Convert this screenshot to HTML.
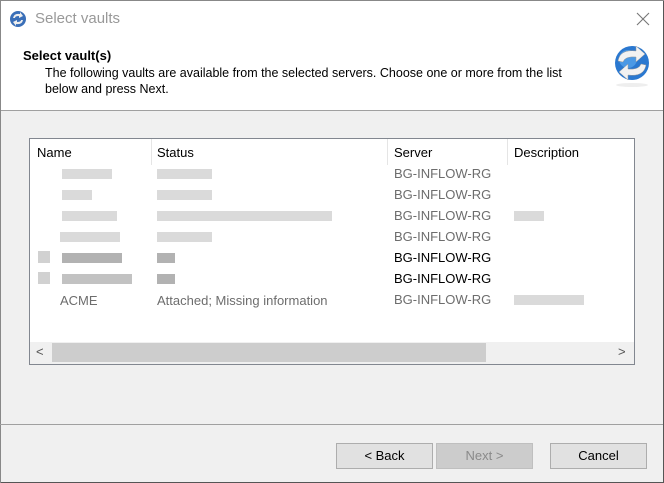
<!DOCTYPE html>
<html><head><style>
body{margin:0;width:664px;height:483px;overflow:hidden;font-family:"Liberation Sans",sans-serif;font-size:13px;background:#f0f0f0;position:relative}
.abs{position:absolute}
.bl{position:absolute;height:10px;background:#d6d6d6;opacity:.9}
.btn{position:absolute;top:443px;width:95px;height:24px;border:1px solid #adadad;background:#e1e1e1;text-align:center;line-height:24px;font-size:13px}
</style></head><body>
<div class="abs" style="left:0;top:0;width:664px;height:110px;background:#fff"></div>
<div class="abs" style="left:0;top:110px;width:664px;height:1px;background:#a0a0a0"></div>
<div class="abs" style="right:0;top:0;width:1px;height:483px;background:#555"></div>
<div class="abs" style="left:0;bottom:0;width:664px;height:1px;background:#555"></div>
<div class="abs" style="left:0;top:0;width:1px;height:483px;background:#888"></div>
<div class="abs" style="left:0;top:0;width:664px;height:1px;background:#888"></div>
<svg class="abs" style="left:9px;top:10px" width="18" height="18" viewBox="0 0 18 18"><circle cx="9" cy="9" r="8" fill="#3a6fb8"/><path d="M4 8 Q5 3 11 4 L11 2 L14 6 L10 8 L10 6 Q6 6 6 8Z" fill="#eee"/><path d="M14 10 Q13 15 7 14 L7 16 L4 12 L8 10 L8 12 Q12 12 12 10Z" fill="#eee"/></svg>
<div class="abs" style="left:35px;top:10px;font-size:15px;color:#999">Select vaults</div>
<svg class="abs" style="left:636px;top:12px" width="14" height="14" viewBox="0 0 14 14"><path d="M1 1L13 13M13 1L1 13" stroke="#777" stroke-width="1.1"/></svg>
<div class="abs" style="left:23px;top:48px;font-weight:bold;font-size:13px">Select vault(s)</div>
<div class="abs" style="left:45px;top:65px;font-size:12.5px;line-height:16px;width:545px">The following vaults are available from the selected servers. Choose one or more from the list below and press Next.</div>
<svg class="abs" style="left:612px;top:43px" width="40" height="46" viewBox="0 0 40 46"><circle cx="20" cy="20" r="17" fill="#2a78d0"/><circle cx="16" cy="16" r="9" fill="#5aa6ee" opacity=".7"/><path d="M6 18 Q8 6 24 8 L24 3 L33 11 L24 19 L24 14 Q13 13 11 19Z" fill="#f2f2f2" stroke="#999" stroke-width=".5"/><path d="M34 22 Q32 34 16 32 L16 37 L7 29 L16 21 L16 26 Q27 27 29 21Z" fill="#f2f2f2" stroke="#999" stroke-width=".5"/><ellipse cx="20" cy="42" rx="16" ry="2" fill="#eee"/></svg>
<div class="abs" style="left:29px;top:138px;width:604px;height:225px;border:1px solid #828790;background:#fff;overflow:hidden">
 <div class="abs" style="left:7px;top:6px">Name</div>
 <div class="abs" style="left:121px;top:0;width:1px;height:26px;background:#e5e5e5"></div>
 <div class="abs" style="left:127px;top:6px">Status</div>
 <div class="abs" style="left:357px;top:0;width:1px;height:26px;background:#e5e5e5"></div>
 <div class="abs" style="left:364px;top:6px">Server</div>
 <div class="abs" style="left:477px;top:0;width:1px;height:26px;background:#e5e5e5"></div>
 <div class="abs" style="left:484px;top:6px">Description</div>
 <div class="bl" style="left:32px;top:30px;width:50px"></div><div class="bl" style="left:127px;top:30px;width:55px"></div>
 <div class="bl" style="left:32px;top:51px;width:30px"></div><div class="bl" style="left:127px;top:51px;width:55px"></div>
 <div class="bl" style="left:32px;top:72px;width:55px"></div><div class="bl" style="left:127px;top:72px;width:175px"></div><div class="bl" style="left:484px;top:72px;width:30px"></div>
 <div class="bl" style="left:30px;top:93px;width:60px"></div><div class="bl" style="left:127px;top:93px;width:55px"></div>
 <div class="bl" style="left:8px;top:112px;width:12px;height:12px;background:#ccc"></div><div class="bl" style="left:32px;top:114px;width:60px;background:#aaa"></div><div class="bl" style="left:127px;top:114px;width:18px;background:#aaa"></div>
 <div class="bl" style="left:8px;top:133px;width:12px;height:12px;background:#ccc"></div><div class="bl" style="left:32px;top:135px;width:70px;background:#bbb"></div><div class="bl" style="left:127px;top:135px;width:18px;background:#aaa"></div>
 <div class="bl" style="left:484px;top:156px;width:70px"></div>
 <div class="abs" style="left:364px;top:24px;color:#6d6d6d;line-height:21px">BG-INFLOW-RG<br>BG-INFLOW-RG<br>BG-INFLOW-RG<br>BG-INFLOW-RG<br><span style="color:#000">BG-INFLOW-RG<br>BG-INFLOW-RG</span><br>BG-INFLOW-RG</div>
 <div class="abs" style="left:30px;top:154px;color:#6d6d6d">ACME</div>
 <div class="abs" style="left:127px;top:154px;color:#6d6d6d">Attached; Missing information</div>
 <div class="abs" style="left:0;top:203px;width:604px;height:22px;background:#f0f0f0"></div>
 <div class="abs" style="left:22px;top:204px;width:434px;height:19px;background:#cdcdcd"></div>
 <div class="abs" style="left:6px;top:205px;color:#555;font-size:13px">&lt;</div>
 <div class="abs" style="left:588px;top:205px;color:#555;font-size:13px">&gt;</div>
</div>
<div class="abs" style="left:0;top:424px;width:663px;height:1px;background:#a0a0a0"></div>
<div class="btn" style="left:336px">&lt; Back</div>
<div class="btn" style="left:436px;background:#cccccc;border-color:#bfbfbf;color:#8a8a8a">Next &gt;</div>
<div class="btn" style="left:550px">Cancel</div>
</body></html>
